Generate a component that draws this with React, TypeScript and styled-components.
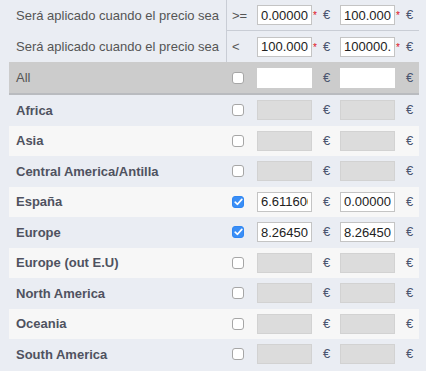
import React from "react";
import styled, { createGlobalStyle, css } from "styled-components";

const GlobalStyle = createGlobalStyle`
    body{
        margin:0;
        background:#eaedf3;
        font-family:"Liberation Sans", Arial, sans-serif;
        color:#555;
    }
`

const Table = styled.div`
    width:410px;
    margin-left:9px;
    display:flex;
    flex-direction:column;
`

type RowKind = "head" | "all" | "odd" | "even"

const Row = styled.div<{ $kind: RowKind }>`
    display:flex;
    align-items:stretch;
    height:30.5px;
    background:#eaedf3;
    ${p => p.$kind === "head" && css`height:31px;`}
    ${p => p.$kind === "all" && css`
        height:31px;
        background:#cccccc;
        border-bottom:2px solid #b9bbbf;
    `}
    ${p => p.$kind === "even" && css`background:#f7f7f7;`}
`

const Label = styled.div<{ $head?: boolean, $bold?: boolean }>`
    width:218px;
    flex:0 0 218px;
    box-sizing:border-box;
    padding-left:7px;
    display:flex;
    align-items:center;
    font-size:13px;
    white-space:nowrap;
    font-weight:${p => p.$bold ? "bold" : "normal"};
    color:${p => p.$bold ? "#4f5260" : "#555"};
    border-right:1px solid ${p => p.$head ? "#c9cdd5" : "transparent"};
`

const Fields = styled.div<{ $line?: boolean }>`
    flex:1;
    display:flex;
    align-items:center;
    border-bottom:${p => p.$line ? "1px solid #c9cdd5" : "none"};
`

const Op = styled.div`
    width:30px;
    flex:0 0 30px;
    box-sizing:border-box;
    padding-left:5px;
    font-size:13px;
    color:#555;
    display:flex;
    align-items:center;
`

const Check = styled.span<{ $on?: boolean }>`
    width:12px;
    height:12px;
    box-sizing:border-box;
    border-radius:3px;
    border:1px solid ${p => p.$on ? "#2f86f2" : "#a6a6a6"};
    background:${p => p.$on ? "#3a8ef6" : "#fff"};
    display:flex;
    align-items:center;
    justify-content:center;
`

const Price = styled.div<{ $last?: boolean }>`
    display:flex;
    align-items:center;
    width:${p => p.$last ? 79 : 83}px;
    flex:0 0 auto;
`

const Field = styled.input<{ $plain?: boolean }>`
    width:55px;
    height:20px;
    box-sizing:border-box;
    border:1px solid #c4c4c4;
    padding:0 3px;
    font-family:"Liberation Sans", Arial, sans-serif;
    font-size:13px;
    color:#222;
    background:#fff;
    outline:none;
    &:disabled{
        background:#dcdcdc;
        border-color:#d2d2d2;
    }
    ${p => p.$plain && css`border-color:#fff;`}
`

const Star = styled.span`
    width:11px;
    align-self:flex-start;
    margin-top:7px;
    padding-left:1px;
    box-sizing:border-box;
    font-size:10px;
    line-height:8px;
    color:#e0131a;
`

const Euro = styled.span`
    align-self:flex-start;
    margin-top:3px;
    font-size:13px;
    line-height:14px;
    color:#4a5570;
`

const Tick = () => (
    <svg width="9" height="8" viewBox="0 0 9 8">
        <path d="M1.2 4.2 L3.5 6.3 L7.8 1.4" fill="none" stroke="#fff" strokeWidth="1.7" strokeLinecap="round" strokeLinejoin="round" />
    </svg>
)

const PriceField = ({ value, last, required, disabled, plain }: { value?: string, last?: boolean, required?: boolean, disabled?: boolean, plain?: boolean }) => (
    <Price $last={last}>
        <Field readOnly value={value || ""} disabled={disabled} $plain={plain} />
        <Star>{required ? "*" : ""}</Star>
        <Euro>€</Euro>
    </Price>
)

const zones = [
    { name: "Africa" },
    { name: "Asia" },
    { name: "Central America/Antilla" },
    { name: "España", on: true, values: ["6.611600", "0.000000"] },
    { name: "Europe", on: true, values: ["8.264500", "8.264500"] },
    { name: "Europe (out E.U)" },
    { name: "North America" },
    { name: "Oceania" },
    { name: "South America" },
]

const ranges = [
    { op: ">=", values: ["0.000000", "100.000000"] },
    { op: "<", values: ["100.000000", "100000.000000"] },
]

export default function App() {
    return (
        <>
            <GlobalStyle />
            <Table>
                {ranges.map((r, i) => (
                    <Row $kind="head" key={"r" + i}>
                        <Label $head>Será aplicado cuando el precio sea</Label>
                        <Fields $line={i === 0}>
                            <Op>{r.op}</Op>
                            <PriceField value={r.values[0]} required />
                            <PriceField value={r.values[1]} required last />
                        </Fields>
                    </Row>
                ))}
                <Row $kind="all">
                    <Label>All</Label>
                    <Fields>
                        <Op><Check /></Op>
                        <PriceField plain />
                        <PriceField plain last />
                    </Fields>
                </Row>
                {zones.map((z, i) => (
                    <Row $kind={i % 2 === 0 ? "odd" : "even"} key={z.name}>
                        <Label $bold>{z.name}</Label>
                        <Fields>
                            <Op><Check $on={z.on}>{z.on ? <Tick /> : null}</Check></Op>
                            <PriceField value={z.values?.[0]} disabled={!z.on} />
                            <PriceField value={z.values?.[1]} disabled={!z.on} last />
                        </Fields>
                    </Row>
                ))}
            </Table>
        </>
    );
}
